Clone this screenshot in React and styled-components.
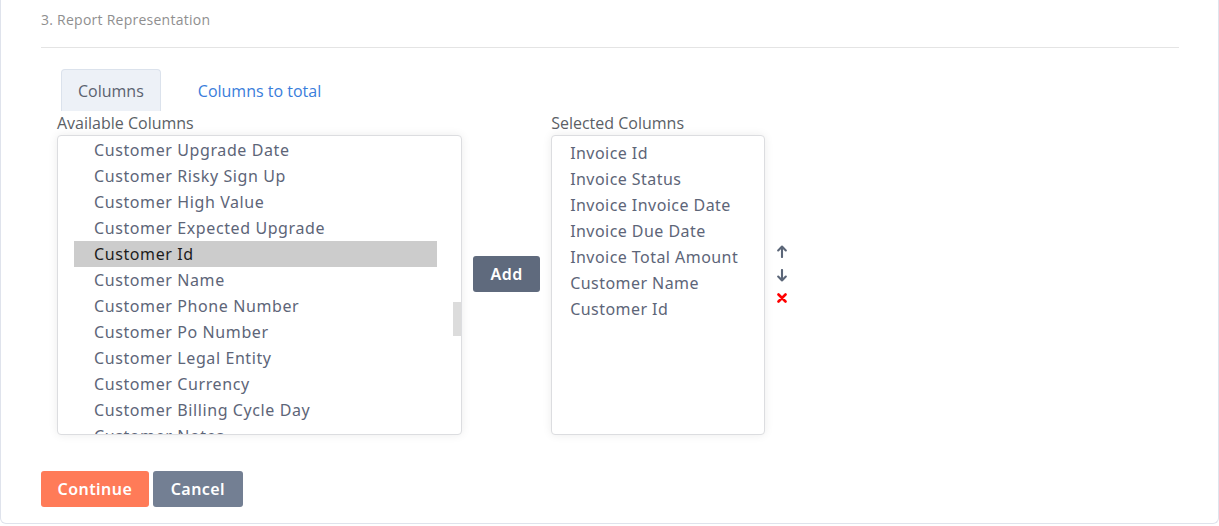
import React from "react";
import styled, { createGlobalStyle } from "styled-components";

const GlobalStyle = createGlobalStyle`
  html, body { margin: 0; padding: 0; background: #fff; }
  body { font-family: "Open Sans", "Noto Sans", sans-serif; }
  * { box-sizing: border-box; }
`;

const Card = styled.div`
  height: 524px;
  border: 1px solid #dfe3ec;
  border-top: none;
  border-radius: 0 0 6px 6px;
  padding: 0 39px 0 40px;
  background: #fff;
`;

const Header = styled.div`
  padding: 10px 0 17px 0;
  border-bottom: 1px solid #e4e4e4;
  font-size: 14px;
  letter-spacing: 0.25px;
  line-height: 20px;
  color: #8f8f8f;
`;

const Tabs = styled.div`
  display: flex;
  margin: 21px 0 0 20px;
  gap: 20px;
`;

const Tab = styled.div`
  height: 42px;
  padding: 1px 16px 0;
  display: flex;
  align-items: center;
  font-size: 16px;
  border-radius: 4px 4px 0 0;
  border: 1px solid ${(p) => (p.$active ? "#dbe2ec" : "transparent")};
  border-bottom: none;
  background: ${(p) => (p.$active ? "#edf1f7" : "transparent")};
  color: ${(p) => (p.$active ? "#5b6270" : "#3a7ddb")};
`;

const Panels = styled.div`
  display: flex;
  align-items: center;
  padding-left: 16px;
`;

const Column = styled.div`
  display: flex;
  flex-direction: column;
  width: ${(p) => p.$w}px;
`;

const Label = styled.div`
  font-size: 16px;
  line-height: 24px;
  color: #5b5f66;
`;

const ListBox = styled.div`
  position: relative;
  height: 300px;
  border: 1px solid #dcdde0;
  border-radius: 4px;
  box-shadow: 0 0 10px rgba(0, 0, 0, 0.08);
  background: #fff;
  overflow: hidden;
  padding: ${(p) => p.$pad};
`;

const Item = styled.div`
  height: 26px;
  line-height: 26px;
  padding-left: ${(p) => p.$indent}px;
  font-family: "Noto Sans", "Open Sans", sans-serif;
  font-size: 16px;
  letter-spacing: ${(p) => p.$ls || 0.6}px;
  white-space: nowrap;
  color: ${(p) => (p.$sel ? "#1c1c1c" : "#5d6578")};
  background: ${(p) => (p.$sel ? "#cccccc" : "transparent")};
`;

const Thumb = styled.div`
  position: absolute;
  right: 0;
  top: 166px;
  width: 8px;
  height: 34px;
  background: #dcdcdc;
`;

const Btn = styled.button`
  height: 36px;
  padding: 0 ${(p) => p.$px || 17}px;
  border: none;
  border-radius: 3px;
  background: ${(p) => p.$bg};
  color: #fff;
  font-family: "Noto Sans", "Open Sans", sans-serif;
  font-size: 16px;
  font-weight: 600;
  letter-spacing: 0.45px;
  cursor: pointer;
`;

const AddWrap = styled.div`
  margin: 0 11px;
  padding-top: 1px;
`;

const Arrows = styled.div`
  display: flex;
  flex-direction: column;
  align-items: center;
  gap: 11px;
  margin-left: 12px;
  padding-top: 1px;
  color: #5b6678;
`;

const Icon = styled.svg`
  display: block;
`;

const Footer = styled.div`
  display: flex;
  gap: 4px;
  margin-top: 36px;
`;

const available = [
  "Customer Upgrade Date",
  "Customer Risky Sign Up",
  "Customer High Value",
  "Customer Expected Upgrade",
  "Customer Id",
  "Customer Name",
  "Customer Phone Number",
  "Customer Po Number",
  "Customer Legal Entity",
  "Customer Currency",
  "Customer Billing Cycle Day",
  "Customer Notes",
];

const selected = [
  "Invoice Id",
  "Invoice Status",
  "Invoice Invoice Date",
  "Invoice Due Date",
  "Invoice Total Amount",
  "Customer Name",
  "Customer Id",
];

const UpIcon = () => (
  <Icon width="10" height="13" viewBox="0 0 10 13" fill="none" stroke="currentColor" strokeWidth="2.1" strokeLinecap="round" strokeLinejoin="round">
    <path d="M5 12V1.6M1.2 5.4L5 1.6L8.8 5.4" />
  </Icon>
);

const DownIcon = () => (
  <Icon width="10" height="13" viewBox="0 0 10 13" fill="none" stroke="currentColor" strokeWidth="2.1" strokeLinecap="round" strokeLinejoin="round">
    <path d="M5 1V11.4M1.2 7.6L5 11.4L8.8 7.6" />
  </Icon>
);

const CrossIcon = () => (
  <Icon width="10" height="10" viewBox="0 0 10 10" fill="none" stroke="#ff0000" strokeWidth="2.6" strokeLinecap="round">
    <path d="M1.5 1.5L8.5 8.5M8.5 1.5L1.5 8.5" />
  </Icon>
);

export default function App() {
  return (
    <>
      <GlobalStyle />
      <Card>
        <Header>3. Report Representation</Header>
        <Tabs>
          <Tab $active>Columns</Tab>
          <Tab>Columns to total</Tab>
        </Tabs>
        <Panels>
          <Column $w={405}>
            <Label>Available Columns</Label>
            <ListBox $pad="1px 24px 0 16px">
              {available.map((t) => (
                <Item key={t} $indent={20} $sel={t === "Customer Id"}>
                  {t}
                </Item>
              ))}
              <Thumb />
            </ListBox>
          </Column>
          <AddWrap>
            <Btn $bg="#5f6a7d" $px={17.5}>Add</Btn>
          </AddWrap>
          <Column $w={214}>
            <Label>Selected Columns</Label>
            <ListBox $pad="4px 8px 0 18px">
              {selected.map((t) => (
                <Item key={t} $indent={0} $ls={0.45}>
                  {t}
                </Item>
              ))}
            </ListBox>
          </Column>
          <Arrows>
            <UpIcon />
            <DownIcon />
            <CrossIcon />
          </Arrows>
        </Panels>
        <Footer>
          <Btn $bg="#ff7b58" $px={16.5}>Continue</Btn>
          <Btn $bg="#737f93" $px={18}>Cancel</Btn>
        </Footer>
      </Card>
    </>
  );
}
